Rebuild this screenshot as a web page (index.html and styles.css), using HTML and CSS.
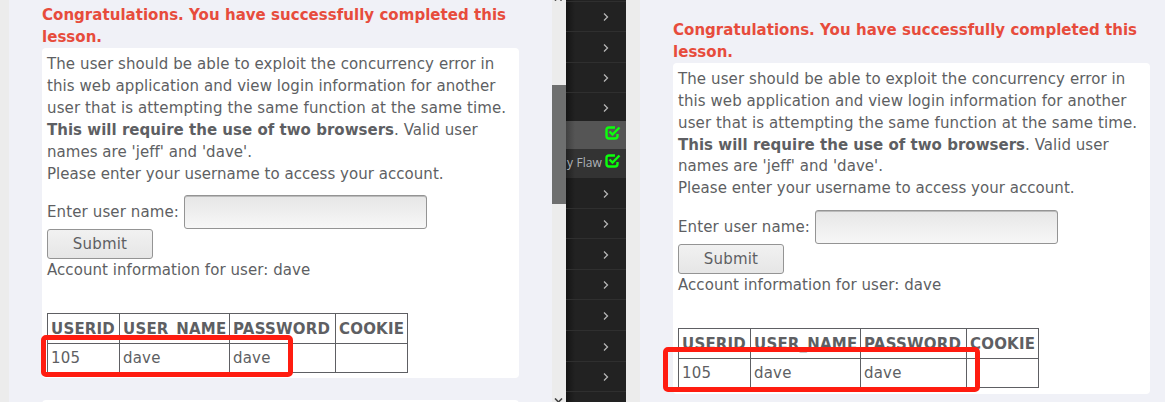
FILE: index.html
```html
<!DOCTYPE html>
<html lang="en">
<head>
<meta charset="utf-8">
<title>Concurrency lesson</title>
<link rel="stylesheet" href="styles.css">
</head>
<body>
<div class="desktop">
  <main class="window window-left">
    <p class="success">Congratulations. You have successfully completed this<br>lesson.</p>
    <section class="card">
      <p class="intro"><span class="loose">The user should be able to exploit the concurrency error in</span><br><span class="medium">this web application and view login information for another</span><br><span class="loosest">user that is attempting the same function at the same time.</span><br><b>This will require the use of two browsers</b>. Valid user<br>names are 'jeff' and 'dave'.<br>Please enter your username to access your account.</p>
      <form class="form">
        <div class="field"><label for="u1">Enter user name:</label><input id="u1" type="text"></div>
        <button type="button">Submit</button>
      </form>
      <p class="account">Account information for user: dave</p>
      <div class="result">
        <div class="row head"><span>USERID</span><span>USER_NAME</span><span>PASSWORD</span><span>COOKIE</span></div>
        <div class="row"><span>105</span><span>dave</span><span>dave</span><span></span></div>
        <div class="mark"></div>
      </div>
    </section>
    <section class="card next"></section>
  </main>
  <div class="scrollbar">
    <svg class="arrow" width="14" height="3" viewBox="0 0 14 3"><path d="M3.500 0V1M9 0V1" stroke="#555" stroke-width="1.500"/></svg>
    <div class="thumb"></div>
    <svg class="arrow down" width="14" height="4" viewBox="0 0 14 4"><path d="M3 0.500L6.500 4L10 0.500" fill="none" stroke="#444" stroke-width="1.600"/></svg>
  </div>
  <nav class="menu">
    <div class="item h30"><svg class="chev" viewBox="0 0 6 8"><path d="M1 .5L4.500 4L1 7.500"/></svg></div>
    <div class="item h31"><svg class="chev" viewBox="0 0 6 8"><path d="M1 .5L4.500 4L1 7.500"/></svg></div>
    <div class="item h30"><svg class="chev" viewBox="0 0 6 8"><path d="M1 .5L4.500 4L1 7.500"/></svg></div>
    <div class="item h29"><svg class="chev" viewBox="0 0 6 8"><path d="M1 .5L4.500 4L1 7.500"/></svg></div>
    <div class="item active"><svg class="check" viewBox="0 0 16 14"><path d="M10 1.500H4Q1.500 1.500 1.500 4V10Q1.500 12.500 4 12.500H10Q12.500 12.500 12.500 10V8"/><path d="M4.500 5.500L7.500 8.500L14.500 1.500"/></svg></div>
    <div class="item sub"><span>y Flaw</span><svg class="check" viewBox="0 0 16 14"><path d="M10 1.500H4Q1.500 1.500 1.500 4V10Q1.500 12.500 4 12.500H10Q12.500 12.500 12.500 10V8"/><path d="M4.500 5.500L7.500 8.500L14.500 1.500"/></svg></div>
    <div class="item h30 plain"><svg class="chev" viewBox="0 0 6 8"><path d="M1 .5L4.500 4L1 7.500"/></svg></div>
    <div class="item h30"><svg class="chev" viewBox="0 0 6 8"><path d="M1 .5L4.500 4L1 7.500"/></svg></div>
    <div class="item h31"><svg class="chev" viewBox="0 0 6 8"><path d="M1 .5L4.500 4L1 7.500"/></svg></div>
    <div class="item h30"><svg class="chev" viewBox="0 0 6 8"><path d="M1 .5L4.500 4L1 7.500"/></svg></div>
    <div class="item h31"><svg class="chev" viewBox="0 0 6 8"><path d="M1 .5L4.500 4L1 7.500"/></svg></div>
    <div class="item h31"><svg class="chev" viewBox="0 0 6 8"><path d="M1 .5L4.500 4L1 7.500"/></svg></div>
    <div class="item h30"><svg class="chev" viewBox="0 0 6 8"><path d="M1 .5L4.500 4L1 7.500"/></svg></div>
    <div class="item h30"></div>
  </nav>
  <main class="window window-right">
    <p class="success">Congratulations. You have successfully completed this<br>lesson.</p>
    <section class="card">
      <p class="intro"><span class="loose">The user should be able to exploit the concurrency error in</span><br><span class="medium">this web application and view login information for another</span><br><span class="loosest">user that is attempting the same function at the same time.</span><br><b>This will require the use of two browsers</b>. Valid user<br>names are 'jeff' and 'dave'.<br>Please enter your username to access your account.</p>
      <form class="form">
        <div class="field"><label for="u2">Enter user name:</label><input id="u2" type="text"></div>
        <button type="button">Submit</button>
      </form>
      <p class="account">Account information for user: dave</p>
      <div class="result">
        <div class="row head"><span>USERID</span><span>USER_NAME</span><span>PASSWORD</span><span>COOKIE</span></div>
        <div class="row"><span>105</span><span>dave</span><span>dave</span><span></span></div>
        <div class="mark"></div>
      </div>
    </section>
  </main>
</div>
</body>
</html>
```
FILE: styles.css
```css
* { box-sizing: border-box; }
body { margin: 0; overflow: hidden; color: #5e5f63; font: 15px/22px "DejaVu Sans", sans-serif; }
p { margin: 0; white-space: nowrap; }
.desktop { display: flex; width: 1165px; height: 402px; overflow: hidden; }
.window { background: #f0f1f7; border-left: 0 solid #ececec; height: 402px; overflow: hidden; }
.window-left { width: 552px; border-left-width: 9px; padding: 4px 33px 0; }
.window-right { width: 539px; border-left-width: 14px; padding: 19px 15px 0 33px; }
.success { height: 44px; color: #e74c3c; font-weight: bold; letter-spacing: .035px; }
.card { height: 330px; padding: 5px; background: #fff; border-radius: 4px; }
.window-right .card { height: 331px; }
.window-right .intro { line-height: 21.8px; padding-top: 1.2px; }
.next { margin-top: 22px; }
.intro { height: 142px; letter-spacing: .04px; }
.intro b { letter-spacing: .02px; }
.loose { letter-spacing: .1px; }
.medium { letter-spacing: .07px; }
.loosest { letter-spacing: .12px; }
.form { display: flex; flex-direction: column; align-items: flex-start; }
.field { display: flex; align-items: center; height: 34px; }
.field label { width: 137px; white-space: nowrap; letter-spacing: .12px; }
input { width: 243px; height: 34px; border: 1px solid #949494; border-radius: 3px; background: linear-gradient(#e6e6e6, #f7f7f7); box-shadow: inset 0 1px #bbb; }
button { width: 106px; height: 30px; padding: 0; border: 1px solid #949494; border-radius: 3px; background: linear-gradient(#f1f1f1, #e6e6e6); color: #5e5f63; font: inherit; letter-spacing: .2px; }
.account { height: 54px; letter-spacing: .06px; }
.result { position: relative; width: 361px; border: solid #5e5f63; border-width: 1px 0 0 1px; letter-spacing: .2px; }
.row { display: grid; grid-template-columns: 72px 110px 106px 72px; grid-template-rows: 100%; height: 29px; line-height: 28px; }
.head { height: 30px; font-weight: bold; }
.row span { border: solid #5e5f63; border-width: 0 1px 1px 0; padding-left: 3px; white-space: nowrap; }
.head span { padding-top: 1px; }
.mark { position: absolute; left: -7px; top: 21px; width: 252px; height: 42px; border: 5px solid #ff1c10; border-radius: 5px; }
.window-right .mark { left: -16px; top: 18px; width: 317px; height: 45px; }
.scrollbar { width: 14px; display: flex; flex-direction: column; background: #ececec; }
.arrow { display: block; }
.thumb { height: 119px; margin-top: 82px; background: #6e6f6f; }
.down { margin-top: auto; }
.menu { width: 60px; padding-top: 1px; overflow: hidden; background: linear-gradient(90deg, #141414, #222 9px); }
.item { display: flex; align-items: center; justify-content: flex-end; border-top: 1px solid #2f2f2f; height: 30px; padding: 1px 17px 0 0; }
.h29 { height: 29px; }
.h31 { height: 31px; }
.plain { border-top-color: transparent; }
.chev { width: 6px; height: 8px; fill: none; stroke: #b5b5b5; stroke-width: 1.3; }
.active, .sub { padding: 0 5px 4px 0; border: 0; }
.active { height: 28px; background: linear-gradient(90deg, #404040, #555 9px); }
.sub { height: 29px; padding-bottom: 5px; background: linear-gradient(90deg, #202020, #333 9px); }
.sub span { margin: 4px 3px 0 0; color: #aeb2b7; font: 12px/22px "Open Sans", sans-serif; letter-spacing: .1px; white-space: nowrap; }
.check { flex: none; width: 16px; height: 14px; fill: none; stroke: #0bff0b; stroke-width: 2.4; }
```
